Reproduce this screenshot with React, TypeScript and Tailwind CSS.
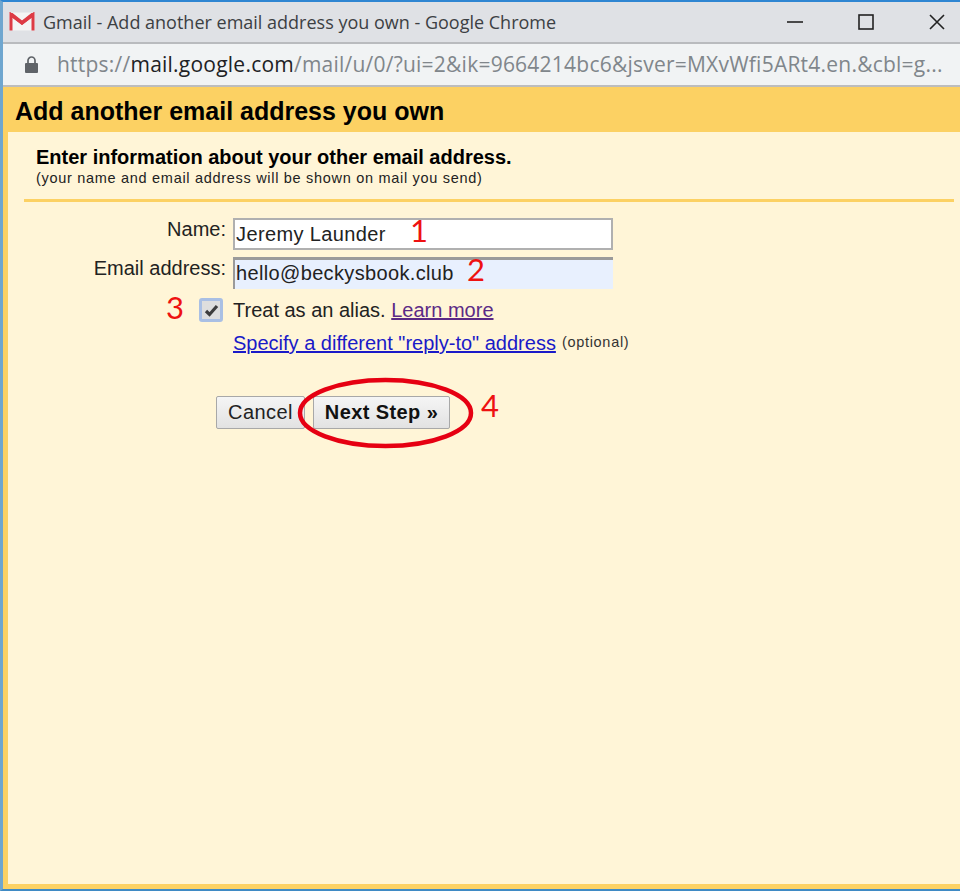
import React from "react";

const Gmail = () => (
  <svg width="26" height="20" viewBox="0 0 26 20" className="shrink-0">
    <rect x="0.5" y="0.5" width="25" height="18" fill="#f4f4f4" />
    <path d="M2 18.5V2.5L13 11 24 2.5v16" fill="none" stroke="#dd3b45" strokeWidth="3" strokeLinejoin="miter" />
    <path d="M1 1h2.5L13 8.5 22.5 1H25v3L13 13 1 4z" fill="#dd3b45" />
  </svg>
);

export default function App() {
  return (
    <div className="relative flex h-[891px] w-[960px] flex-col overflow-hidden border-t-2 border-b-2 border-l-[3px] border-t-[#2f86d2] border-b-[#3f8ac4] border-l-[#6fa6cf] bg-[#fff5d7] font-['Liberation_Sans',Arial,sans-serif] text-black">
      <div className="flex h-[42px] shrink-0 items-center border-b-2 border-[#b9bbbe] bg-[#dfe1e5] pl-[6px] pr-[15px] font-['Open_Sans',sans-serif] text-[18px] text-[#3c4043]">
        <Gmail />
        <span className="ml-[8px] whitespace-nowrap">Gmail - Add another email address you own - Google Chrome</span>
        <div className="ml-auto flex items-center gap-[55px]">
          <svg width="16" height="16" viewBox="0 0 16 16"><path d="M0 8h16" stroke="#222" strokeWidth="1.6" /></svg>
          <svg width="16" height="16" viewBox="0 0 16 16"><rect x="1" y="1" width="14" height="14" fill="none" stroke="#222" strokeWidth="1.6" /></svg>
          <svg width="16" height="16" viewBox="0 0 16 16"><path d="M1 1l14 14M15 1L1 15" stroke="#222" strokeWidth="1.6" /></svg>
        </div>
      </div>
      <div className="flex h-[43px] shrink-0 items-center border-b-2 border-[#bdbdbd] bg-[#f1f3f4] pl-[22px] font-['Open_Sans',sans-serif] text-[21px] tracking-[0.23px] text-[#80868b]">
        <svg width="13" height="17" viewBox="0 0 13 17" className="shrink-0">
          <path d="M3 7V4.5a3.5 3.5 0 0 1 7 0V7" fill="none" stroke="#5f6368" strokeWidth="1.7" />
          <rect x="0" y="7" width="13" height="10" rx="1" fill="#5f6368" />
        </svg>
        <span className="ml-[19px] whitespace-nowrap">https://<span className="text-[#202124]">mail.google.com</span>/mail/u/0/?ui=2&amp;ik=9664214bc6&amp;jsver=MXvWfi5ARt4.en.&amp;cbl=g...</span>
      </div>
      <div className="flex h-[45px] shrink-0 items-center bg-[#fcd163] pl-[12px] pt-[4px] text-[25px] font-bold">Add another email address you own</div>
      <div className="min-h-0 flex-1 border-b-[5px] border-l-[5px] border-[#fcd163] pl-[16px] pr-[6px]">
        <div className="border-b-[3px] border-[#fcd163] pb-[14px] pl-[12px] pt-[15px]">
          <div className="text-[20px] font-bold leading-[21px]">Enter information about your other email address.</div>
          <div className="mt-[4px] text-[14.5px] leading-[13px] tracking-[0.7px] text-[#222]">(your name and email address will be shown on mail you send)</div>
        </div>
        <div className="mt-[16px] grid grid-cols-[202px_380px] gap-x-[7px]">
          <div className="pt-[1px] text-right text-[20px] leading-[21px] text-[#222]">Name:</div>
          <div className="flex h-[32px] items-center border-2 border-[#b0b0b0] bg-white pl-[1px] text-[20px] tracking-[0.38px] text-[#222]">Jeremy Launder</div>
          <div className="mt-[7px] pt-[1px] text-right text-[20px] leading-[21px] text-[#222]">Email address:</div>
          <div className="mt-[7px] flex h-[32px] items-center border-l-2 border-t-[3px] border-[#9a9a9a] bg-[#e8f0fe] pb-[3px] pl-[1px] text-[20px] tracking-[0.35px] text-[#222]">hello@beckysbook.club</div>
          <div className="mt-[9px] flex justify-end pr-[3px]">
            <span className="flex h-[24px] w-[24px] items-center justify-center rounded-[3px] border-[3px] border-[#a9bfe4] bg-[#dedede]">
              <svg width="15" height="13" viewBox="0 0 15 13"><path d="M2 7l3.5 3.5L13 2" fill="none" stroke="#3d3d3d" strokeWidth="3.2" /></svg>
            </span>
          </div>
          <div className="mt-[9px] flex h-[24px] items-center whitespace-nowrap text-[20px] text-[#222]">Treat as an alias.&nbsp;<a className="text-[#5b2a86] underline">Learn more</a></div>
          <div />
          <div className="mt-[9px] flex h-[24px] items-center whitespace-nowrap text-[20px]">
            <a className="text-[#1a1ac8] underline">Specify a different "reply-to" address</a>
            <span className="ml-[6px] text-[14.5px] tracking-[0.7px] text-[#333]">(optional)</span>
          </div>
        </div>
        <div className="ml-[192px] mt-[41px] flex gap-[8px]">
          <button className="h-[33px] w-[89px] rounded-[2px] border border-[#a8a8a8] bg-gradient-to-b from-[#f5f5f5] to-[#e2e2e2] pb-[2px] text-[20px] tracking-[0.45px] text-[#222]">Cancel</button>
          <button className="h-[33px] w-[137px] rounded-[2px] border border-[#a8a8a8] bg-gradient-to-b from-[#f5f5f5] to-[#e2e2e2] pb-[2px] text-[20px] font-bold tracking-[0.4px] text-[#111]">Next Step »</button>
        </div>
      </div>

      <svg className="absolute left-[-3px] top-[-2px]" width="960" height="891" viewBox="0 0 960 891" fill="none">
        <ellipse cx="385.5" cy="413" rx="85.5" ry="33" stroke="#e60012" strokeWidth="4.5" />
      </svg>
      <span className="absolute left-[407px] top-[209px] font-['Lato',sans-serif] text-[31px] leading-[38px] text-[#ee1111]">1</span>
      <span className="absolute left-[464px] top-[248px] font-['Lato',sans-serif] text-[31px] leading-[38px] text-[#ee1111]">2</span>
      <span className="absolute left-[163px] top-[286px] font-['Lato',sans-serif] text-[31px] leading-[38px] text-[#ee1111]">3</span>
      <span className="absolute left-[478px] top-[384px] font-['Lato',sans-serif] text-[31px] leading-[38px] text-[#ee1111]">4</span>
    </div>
  );
}
